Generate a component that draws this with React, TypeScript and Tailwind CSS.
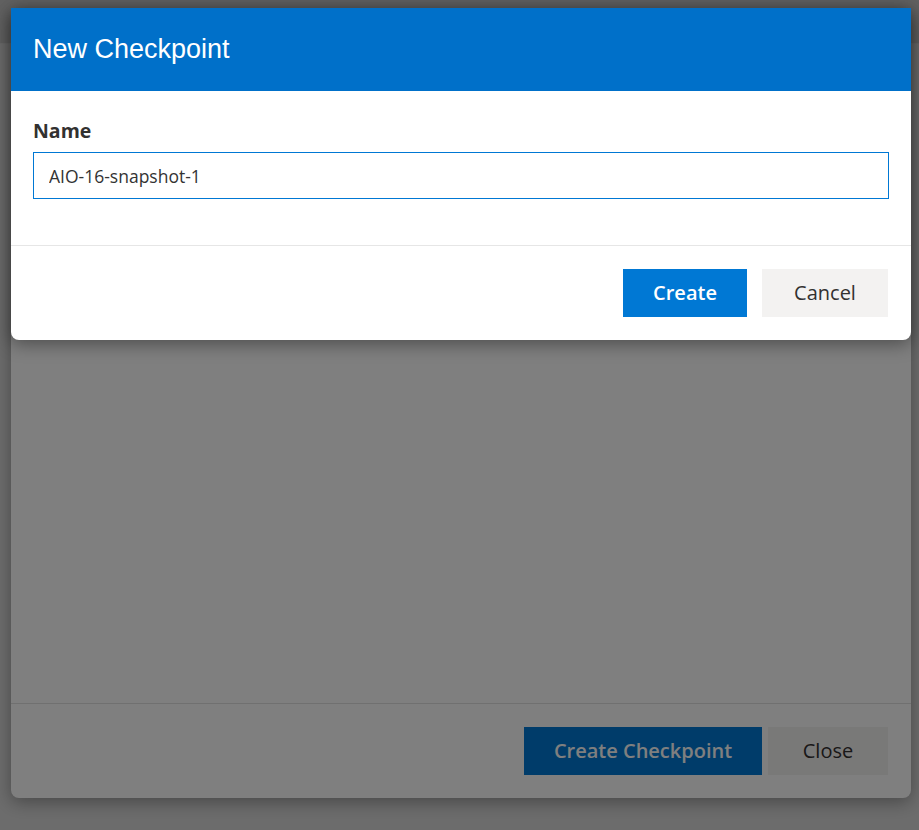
import React from 'react'

const sans = "font-['Open_Sans',_'Noto_Sans',sans-serif]"

const BackgroundDialog: React.FC = () => (
  <div className="absolute left-[11px] top-[8px] w-[900px] h-[790px] flex flex-col bg-white rounded-[8px] shadow-[0_4px_18px_rgba(0,0,0,0.35)]">
    <div className="flex-1" />
    <div className="flex justify-end gap-[6px] border-t border-[#e1e1e1] px-[23px] pt-[23px] pb-[23px]">
      <button className="h-[48px] w-[238px] bg-[#0078d4] text-white text-[20px] font-semibold">Create Checkpoint</button>
      <button className="h-[48px] w-[120px] bg-[#f3f2f1] text-[#323130] text-[20px]">Close</button>
    </div>
  </div>
)

const NewCheckpointDialog: React.FC = () => (
  <div className="absolute left-[11px] top-[8px] w-[900px] flex flex-col bg-white rounded-b-[8px] overflow-hidden shadow-[0_4px_18px_rgba(0,0,0,0.4)]">
    <div className="h-[83px] flex items-center px-[22px] bg-[#0070c9]">
      <h2 className="font-['Liberation_Sans',Arial,sans-serif] text-[27px] text-white">New Checkpoint</h2>
    </div>
    <div className="px-[22px] pt-[28px] pb-[46px]">
      <label className="block text-[19.5px] leading-[24px] font-bold text-[#323130] mb-[9px]">Name</label>
      <input
        readOnly
        value="AIO-16-snapshot-1"
        className="block w-full h-[47px] border border-[#0078d4] px-[15px] text-[17.5px] text-[#333333] outline-none"
      />
    </div>
    <div className="flex justify-end gap-[15px] border-t border-[#e6e6e6] px-[23px] pt-[23px] pb-[23px]">
      <button className="h-[48px] w-[124px] bg-[#0078d4] text-white text-[20px] font-semibold">Create</button>
      <button className="h-[48px] w-[126px] bg-[#f3f2f1] text-[#323130] text-[20px]">Cancel</button>
    </div>
  </div>
)

export default function App() {
  return (
    <div className={`relative w-[919px] h-[830px] overflow-hidden bg-white ${sans}`}>
      <div className="h-[44px] bg-[#e6e6e6] border-b border-[#fafafa]" />
      <div className="absolute inset-0 bg-black/15" />
      <BackgroundDialog />
      <div className="absolute inset-0 bg-black/50" />
      <NewCheckpointDialog />
    </div>
  )
}
